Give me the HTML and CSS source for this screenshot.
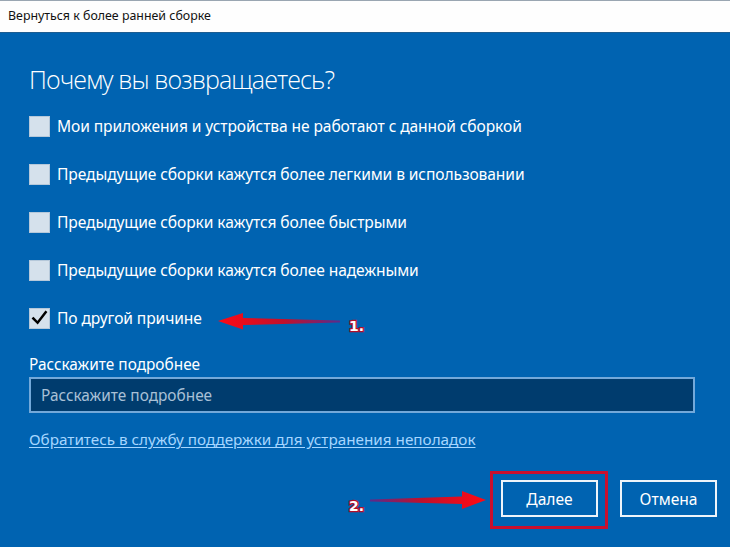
FILE: index.html
```html
<!DOCTYPE html>
<html lang="ru">
<head>
<meta charset="utf-8">
<title>Вернуться к более ранней сборке</title>
<link rel="stylesheet" href="styles.css">
</head>
<body>
<div class="window">
  <div class="titlebar">Вернуться к более ранней сборке</div>
  <div class="main">
    <h1 class="heading">Почему вы возвращаетесь?</h1>
    <ul class="options">
      <li class="option"><span class="box"></span><span class="label">Мои приложения и устройства не работают с данной сборкой</span></li>
      <li class="option"><span class="box"></span><span class="label">Предыдущие сборки кажутся более легкими в использовании</span></li>
      <li class="option"><span class="box"></span><span class="label">Предыдущие сборки кажутся более быстрыми</span></li>
      <li class="option"><span class="box"></span><span class="label">Предыдущие сборки кажутся более надежными</span></li>
      <li class="option"><span class="box checked"><svg class="tick" viewBox="0 0 20 20" width="20" height="20"><path d="M3.5 10.5 L8 15 L16.5 4" fill="none" stroke="#000" stroke-width="2.6" stroke-linecap="square"/></svg></span><span class="label">По другой причине</span></li>
    </ul>
    <div class="field-label">Расскажите подробнее</div>
    <div class="input"><span class="placeholder">Расскажите подробнее</span></div>
    <a class="link" href="#">Обратитесь в службу поддержки для устранения неполадок</a>
    <div class="buttons">
      <div class="btn">Далее</div>
      <div class="btn">Отмена</div>
    </div>
  </div>
  <svg class="annot" viewBox="0 0 730 547" width="730" height="547">
    <defs>
      <linearGradient id="g1" x1="340" y1="0" x2="218" y2="0" gradientUnits="userSpaceOnUse">
        <stop offset="0" stop-color="#5a2c8c"/>
        <stop offset="0.45" stop-color="#c0102c"/>
        <stop offset="1" stop-color="#ff0a14"/>
      </linearGradient>
      <linearGradient id="g2" x1="370" y1="0" x2="485" y2="0" gradientUnits="userSpaceOnUse">
        <stop offset="0" stop-color="#5a2c8c"/>
        <stop offset="0.45" stop-color="#c0102c"/>
        <stop offset="1" stop-color="#ff0a14"/>
      </linearGradient>
    </defs>
    <polygon points="340,320.5 243,318 243,313 218,321 243,329.5 243,325 340,322.5" fill="url(#g1)"/>
    <polygon points="370,499.5 462,496.5 462,491 486,500 462,509 462,504 370,501.5" fill="url(#g2)"/>
    <rect x="491.5" y="472.5" width="115" height="55" fill="none" stroke="#c8102e" stroke-width="3"/>
    <text class="num" x="349" y="331">1.</text>
    <text class="num" x="349" y="511">2.</text>
  </svg>
</div>
</body>
</html>
```
FILE: styles.css
```css
html, body {
  margin: 0;
  padding: 0;
}
body {
  width: 730px;
  height: 547px;
  overflow: hidden;
  background: #0063b1;
  font-family: "Noto Sans", "Open Sans", sans-serif;
}
.window {
  position: relative;
  width: 730px;
  height: 547px;
  display: flex;
  flex-direction: column;
}
.titlebar {
  height: 31px;
  border-top: 1px solid #9aa6b2;
  border-bottom: 1px solid #1d5d91;
  background: #fefefe;
  color: #111;
  font-size: 12.4px;
  line-height: 30px;
  padding-left: 8px;
}
.main {
  flex: 1;
  display: flex;
  flex-direction: column;
  padding: 0 13px 0 29px;
  color: #fff;
}
.heading {
  margin: 28px 0 0 0;
  font-family: "Open Sans", "Noto Sans", sans-serif;
  font-weight: 300;
  font-size: 25px;
  letter-spacing: -0.9px;
  line-height: 36px;
  color: #fff;
}
.options {
  list-style: none;
  margin: 5px 0 0 0;
  padding: 0;
}
.option {
  height: 48px;
  display: flex;
  align-items: center;
}
.box {
  width: 19px;
  height: 19px;
  background: #d5e1ec;
  border: 1px solid #b5c8da;
  margin-right: 7px;
  display: flex;
  align-items: center;
  justify-content: center;
  flex: none;
}
.tick {
  display: block;
}
.label {
  font-size: 15.6px;
  color: #fff;
  letter-spacing: -0.1px;
}
.field-label {
  margin-top: 12px;
  font-size: 15.4px;
  line-height: 22px;
}
.input {
  margin-top: 1px;
  margin-right: 22px;
  height: 32px;
  border: 2px solid #73a9da;
  background: #003c6e;
  display: flex;
  align-items: center;
  padding-left: 10px;
}
.placeholder {
  color: #a9c0d6;
  font-size: 15.4px;
}
.link {
  margin-top: 15px;
  align-self: flex-start;
  font-size: 15.25px;
  line-height: 22px;
  color: #a6d6ff;
  text-decoration: underline;
  text-underline-offset: 2px;
}
.buttons {
  margin-top: 30px;
  display: flex;
  justify-content: flex-end;
  gap: 22px;
}
.btn {
  width: 93px;
  height: 33px;
  border: 2px solid #eef4fa;
  display: flex;
  align-items: center;
  justify-content: center;
  font-size: 15.6px;
  color: #fff;
}
.annot {
  position: absolute;
  left: 0;
  top: 0;
  pointer-events: none;
}
.num {
  font-family: "DejaVu Sans", sans-serif;
  font-weight: bold;
  font-size: 14px;
  fill: #fff;
  stroke: #b0102a;
  stroke-width: 2.5px;
  paint-order: stroke;
}
```
